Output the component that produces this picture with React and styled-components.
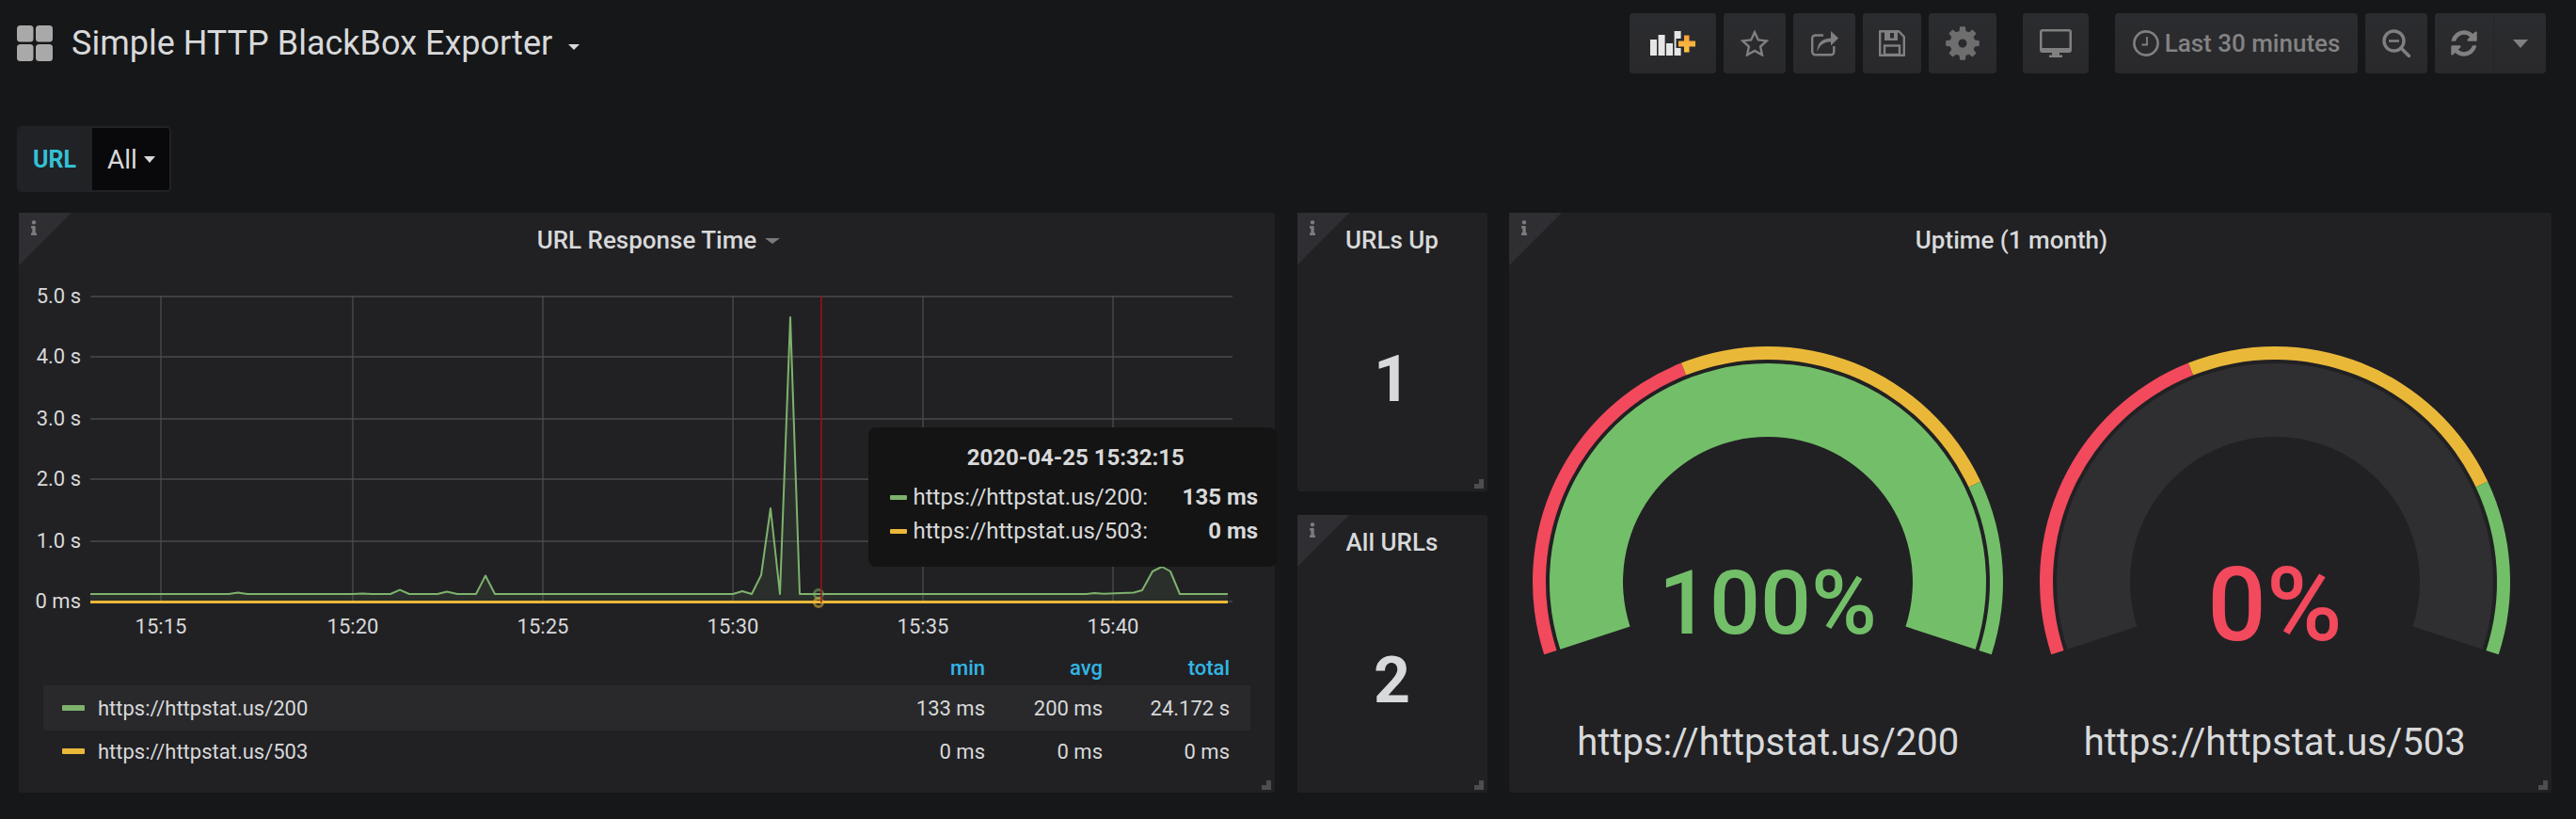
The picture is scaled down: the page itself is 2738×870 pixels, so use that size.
import React from "react";
import styled, { createGlobalStyle } from "styled-components";
import { FaInfo } from "react-icons/fa";

const GlobalStyle = createGlobalStyle`
  html, body {
    margin: 0;
    padding: 0;
    background: #161719;
  }
  body {
    font-family: Roboto, "Liberation Sans", sans-serif;
    color: #d8d9da;
    overflow: hidden;
  }
`;

const Page = styled.div`
  width: 2738px;
  height: 870px;
  box-sizing: border-box;
  background: #161719;
`;

const TopBar = styled.header`
  height: 64px;
  padding: 14px 32px 0 18px;
  display: flex;
  align-items: center;
  justify-content: space-between;
`;

const TitleGroup = styled.div`
  display: flex;
  align-items: center;
`;

const DashTitle = styled.h1`
  margin: 0 0 0 20px;
  font-size: 36px;
  font-weight: 400;
  line-height: 64px;
  color: #d8d9da;
`;

const Caret = styled.span`
  display: inline-block;
  width: 0;
  height: 0;
  border-left: ${(p) => p.$size}px solid transparent;
  border-right: ${(p) => p.$size}px solid transparent;
  border-top: ${(p) => p.$height || p.$size}px solid ${(p) => p.$color || "#d8d9da"};
`;

const TitleCaret = styled(Caret)`
  margin: 8px 0 0 17px;
`;

const Toolbar = styled.div`
  display: flex;
  align-items: center;
`;

const ToolButton = styled.div`
  width: ${(p) => p.$w}px;
  height: 64px;
  margin-left: ${(p) => p.$gap || 8}px;
  border-radius: 4px;
  background: linear-gradient(#2b2c2f, #29292c);
  display: flex;
  align-items: center;
  justify-content: center;
  color: #808080;
  flex: none;
`;

const TimeLabel = styled.span`
  margin-left: 6px;
  font-size: 26px;
  font-weight: 500;
  color: #838383;
`;

const RefreshPart = styled.div`
  flex: ${(p) => (p.$narrow ? "0 0 55px" : "1")};
  height: 100%;
  display: flex;
  align-items: center;
  justify-content: center;
  border-left: ${(p) => (p.$narrow ? "1px solid #242528" : "none")};
`;

const VarRow = styled.div`
  height: 70px;
  margin: 56px 0 22px 18px;
  display: flex;
`;

const VarBox = styled.div`
  display: flex;
  border: 2px solid #202226;
  border-radius: 5px;
  overflow: hidden;
`;

const VarLabel = styled.div`
  width: 78px;
  padding-right: 2px;
  box-sizing: border-box;
  background: #212226;
  color: #33c1d6;
  font-size: 25px;
  font-weight: 700;
  display: flex;
  align-items: center;
  justify-content: center;
`;

const VarValue = styled.div`
  width: 82px;
  background: #09090b;
  color: #d8d9da;
  font-size: 28px;
  display: flex;
  align-items: center;
  justify-content: flex-start;
  padding-left: 16px;
  box-sizing: border-box;
  gap: 7px;
`;

const Dashboard = styled.main`
  padding: 0 26px 0 20px;
  display: grid;
  grid-template-columns: 1335px 202px 1108px;
  column-gap: 23.5px;
  height: 616px;
`;

const Stack = styled.div`
  display: flex;
  flex-direction: column;
  gap: 25px;
`;

const Panel = styled.section`
  position: relative;
  flex: 1;
  background: #212124;
  border-radius: 3px;
  display: flex;
  flex-direction: column;
  min-width: 0;

  &::after {
    content: "";
    position: absolute;
    right: 4px;
    bottom: 3px;
    width: 5px;
    height: 5px;
    border-right: 5px solid #4d4d50;
    border-bottom: 5px solid #4d4d50;
  }
`;

const InfoCorner = styled.div`
  position: absolute;
  left: 0;
  top: 0;
  width: 56px;
  height: 56px;
  background: #2e2e33;
  clip-path: polygon(0 0, 100% 0, 0 100%);
  color: #7b7b7b;
  padding: 8px 0 0 8px;
  box-sizing: border-box;
`;

const PanelHead = styled.div`
  height: 58px;
  flex: none;
  padding-right: ${(p) => p.$shift || 0}px;
  display: flex;
  align-items: center;
  justify-content: center;
`;

const PanelTitle = styled.h2`
  position: relative;
  margin: 0;
  font-size: 26px;
  font-weight: 500;
  color: #d8d9da;
`;

const TitleDrop = styled(Caret)`
  position: absolute;
  left: 100%;
  top: 13px;
  margin-left: 9px;
`;

const ChartSvg = styled.svg`
  display: block;
  flex: none;
`;

const AxisText = styled.text`
  font-size: 22px;
  fill: #d8d9da;
  dominant-baseline: central;
`;

const Legend = styled.div`
  padding: 0 26px;
`;

const LegendRow = styled.div`
  height: ${(p) => p.$h}px;
  display: grid;
  grid-template-columns: 1fr 125px 125px 135px;
  padding: 0 22px 0 20px;
  align-items: center;
  background: ${(p) => (p.$active ? "#29292c" : "transparent")};
  font-size: 22px;
  color: #d8d9da;
`;

const LegendHead = styled(LegendRow)`
  color: #33b5e5;
  font-weight: 500;
`;

const LegendName = styled.div`
  display: flex;
  align-items: center;
  gap: 14px;
`;

const Swatch = styled.i`
  display: block;
  width: ${(p) => p.$w}px;
  height: ${(p) => p.$h}px;
  border-radius: 1px;
  background: ${(p) => p.$color};
`;

const Num = styled.div`
  text-align: right;
`;

const Tooltip = styled.div`
  position: absolute;
  left: 902.5px;
  top: 228px;
  width: 434.5px;
  height: 148px;
  box-sizing: border-box;
  padding: 16px 20px 0 23px;
  background: #141414;
  border-radius: 8px;
  color: #d8d9da;
  font-size: 24px;
`;

const TipTitle = styled.div`
  text-align: center;
  font-weight: 700;
  line-height: 32px;
  margin-bottom: 8px;
  margin-right: -4px;
`;

const TipRow = styled.div`
  display: flex;
  align-items: center;
  height: 36px;
  gap: 7px;
`;

const TipValue = styled.b`
  margin-left: auto;
  font-weight: 700;
`;

const StatValue = styled.div`
  flex: 1;
  display: flex;
  align-items: center;
  justify-content: center;
  font-size: 68px;
  font-weight: 700;
  color: #d8d9da;
`;

const GaugeGrid = styled.div`
  flex: 1;
  display: grid;
  grid-template-columns: 1fr 1fr;
  padding: 0 25px 0 6px;
`;

const GaugeCell = styled.div`
  display: flex;
  flex-direction: column;
  align-items: center;
`;

const GaugeText = styled.text`
  font-size: ${(p) => p.$size}px;
  font-weight: 500;
  fill: ${(p) => p.$color};
  text-anchor: middle;
  dominant-baseline: central;
`;

const GaugeLabel = styled.div`
  margin-top: 45px;
  font-size: 40px;
  line-height: 48px;
  color: #d8d9da;
`;

const GREEN = "#73bf69";
const RED = "#f2495c";
const YELLOW = "#eab839";

// grid of the time graph, in page pixels
const Y_TICKS = [
  ["5.0 s", 315],
  ["4.0 s", 379],
  ["3.0 s", 445],
  ["2.0 s", 509],
  ["1.0 s", 575],
  ["0 ms", 639],
];
const X_TICKS = [
  ["15:15", 171],
  ["15:20", 375],
  ["15:25", 577],
  ["15:30", 779],
  ["15:35", 981],
  ["15:40", 1183],
];
const SERIES = [
  [96, 631], [243, 631], [253, 629.5], [263, 631], [375, 631], [385, 630.4], [395, 631],
  [415, 631], [425, 626.6], [435, 631], [465, 631], [475, 628.5], [486, 631], [506, 631],
  [516, 611.5], [526, 631], [779, 631], [789, 628], [799, 631], [809, 611], [819, 540],
  [829, 631], [840, 337], [850, 631], [1155, 631], [1163, 630], [1173, 630.7], [1192, 630],
  [1205, 629.5], [1214, 627], [1225, 607], [1235, 602], [1244, 607], [1254, 631], [1305, 631],
];

const polar = (cx, cy, r, deg) => {
  const a = (deg * Math.PI) / 180;
  return [cx + r * Math.cos(a), cy + r * Math.sin(a)];
};

// sector of a ring, from and to as a share of the 216 degree sweep
const sector = (cx, cy, r0, r1, from, to) => {
  const a0 = 162 + from * 216;
  const a1 = 162 + to * 216;
  const large = a1 - a0 > 180 ? 1 : 0;
  const [x0, y0] = polar(cx, cy, r1, a0);
  const [x1, y1] = polar(cx, cy, r1, a1);
  const [x2, y2] = polar(cx, cy, r0, a1);
  const [x3, y3] = polar(cx, cy, r0, a0);
  return `M${x0} ${y0}A${r1} ${r1} 0 ${large} 1 ${x1} ${y1}L${x2} ${y2}A${r0} ${r0} 0 ${large} 0 ${x3} ${y3}Z`;
};

const gearPoints = () => {
  const pts = [];
  for (let i = 0; i < 8; i++) {
    const c = i * 45 - 90;
    [[18, -9], [18, 9], [13.5, 15], [13.5, 30]].forEach(([r, d]) => {
      const [x, y] = polar(18, 18, r, c + d);
      pts.push(`${x.toFixed(2)},${y.toFixed(2)}`);
    });
  }
  return pts.join(" ");
};

const GridIcon = () => (
  <svg width="38" height="38" viewBox="0 0 38 38">
    <rect x="0" y="0" width="17.5" height="17.5" rx="3.5" fill="#a9a9a9" />
    <rect x="20" y="0" width="18" height="17.5" rx="3.5" fill="#a9a9a9" />
    <rect x="0" y="20" width="17.5" height="18" rx="3.5" fill="#a9a9a9" />
    <rect x="20" y="20" width="18" height="18" rx="3.5" fill="#a9a9a9" />
  </svg>
);

const AddPanelIcon = () => (
  <svg width="48" height="26" viewBox="0 0 48 26">
    <defs>
      <linearGradient id="plus" x1="0" y1="0" x2="0" y2="1">
        <stop offset="0" stopColor="#f9a03a" />
        <stop offset="1" stopColor="#fbc240" />
      </linearGradient>
    </defs>
    <rect x="0" y="9" width="7" height="17" fill="#e6e6e6" />
    <rect x="8.6" y="4" width="7" height="22" fill="#e6e6e6" />
    <rect x="17" y="13" width="7" height="13" fill="#e6e6e6" />
    <rect x="25.6" y="0" width="7" height="26" fill="#e6e6e6" />
    <path d="M35 3.5h7v6h6v7h-6v6h-7v-6h-6v-7h6z" fill="#2a2b2e" stroke="#2a2b2e" strokeWidth="3" />
    <path d="M36 4.5h5.5v6h6.5v6h-6.500v6h-5.500v-6h-6v-6h6z" fill="url(#plus)" />
  </svg>
);

const StarIcon = () => (
  <svg width="30" height="28" viewBox="0 0 30 28">
    <path
      d="M15 2.200 18.800 10.400 27.800 11.400 21.100 17.500 23 26.400 15 21.900 7 26.400 8.900 17.500 2.200 11.400 11.200 10.400Z"
      fill="none"
      stroke="#7f7f7f"
      strokeWidth="2.400"
      strokeLinejoin="miter"
    />
  </svg>
);

const ShareIcon = () => (
  <svg width="29" height="28" viewBox="0 0 29 28">
    <path
      d="M13 5.500H4.500a3.300 3.300 0 0 0-3.300 3.300V23a3.300 3.300 0 0 0 3.300 3.300H21a3.300 3.300 0 0 0 3.300-3.300V17"
      fill="none"
      stroke="#808080"
      strokeWidth="2.400"
    />
    <path d="M6.500 23C6.500 14 11 9 21 8.500V1L29 8.500 21 16.500V12.500C14 12.500 9.500 15 6.500 23Z" fill="#808080" />
  </svg>
);

const SaveIcon = () => (
  <svg width="28" height="28" viewBox="0 0 28 28">
    <path d="M1.200 1.200H21L26.800 7V26.800H1.200Z" fill="none" stroke="#808080" strokeWidth="2.400" strokeLinejoin="round" />
    <path d="M6 1.200H20V11H6ZM12 3V8.500H16V3Z" fill="#808080" fillRule="evenodd" />
    <rect x="6" y="16.500" width="16" height="9.500" fill="none" stroke="#808080" strokeWidth="2.400" />
  </svg>
);

const GearIcon = () => (
  <svg width="36" height="36" viewBox="0 0 36 36">
    <path
      d={`M${gearPoints().split(" ").join("L")}Z M18 13.500a4.500 4.500 0 1 0 0.010 0Z`}
      fill="#6e6e6e"
      fillRule="evenodd"
    />
  </svg>
);

const MonitorIcon = () => (
  <svg width="34" height="30" viewBox="0 0 34 30">
    <path
      d="M3 0h28a3 3 0 0 1 3 3v19a3 3 0 0 1-3 3H21v2.500h3V30H10v-2.500h3V25H3a3 3 0 0 1-3-3V3a3 3 0 0 1 3-3ZM2.500 2.500V20h29V2.500Z"
      fill="#808080"
      fillRule="evenodd"
    />
  </svg>
);

const ClockIcon = () => (
  <svg width="28" height="28" viewBox="0 0 28 28">
    <circle cx="14" cy="14" r="12.600" fill="none" stroke="#808080" strokeWidth="2.600" />
    <path d="M15 7v8.500H9.500" fill="none" stroke="#808080" strokeWidth="1.800" />
  </svg>
);

const ZoomOutIcon = () => (
  <svg width="30" height="30" viewBox="0 0 30 30">
    <circle cx="12.500" cy="12.500" r="10.500" fill="none" stroke="#808080" strokeWidth="3.400" />
    <path d="M20 20l8.500 8.500" stroke="#808080" strokeWidth="3.600" strokeLinecap="round" />
    <path d="M7 12.500h11" stroke="#808080" strokeWidth="2.600" />
  </svg>
);

const RefreshIcon = () => (
  <svg width="32" height="32" viewBox="0 0 1792 1792">
    <path
      fill="#808080"
      d="M1639 1056q0 5-1 7-64 268-268 434.500t-478 166.500q-146 0-282.500-55t-243.500-157l-129 129q-19 19-45 19t-45-19-19-45v-448q0-26 19-45t45-19h448q26 0 45 19t19 45-19 45l-137 137q71 66 161 102t187 36q134 0 250-65t186-179q11-17 53-117 8-23 30-23h192q13 0 22.500 9.500t9.500 22.500zm25-800v448q0 26-19 45t-45 19h-448q-26 0-45-19t-19-45 19-45l138-138q-148-137-349-137-134 0-250 65t-186 179q-11 17-53 117-8 23-30 23h-199q-13 0-22.500-9.500t-9.500-22.500v-7q65-268 270-434.500t480-166.500q146 0 284 55.500t245 156.500l130-129q19-19 45-19t45 19 19 45z"
    />
  </svg>
);

const CornerInfo = () => (
  <InfoCorner>
    <FaInfo size={16} />
  </InfoCorner>
);

const TimeGraph = () => {
  const line = SERIES.map((p) => p.join(",")).join(" ");
  const area = `96,639 ${line} 1305,639`;
  return (
    <ChartSvg width="1335" height="406" viewBox="20 284 1335 406">
      {Y_TICKS.map(([label, y]) => (
        <g key={label}>
          <line x1="96" x2="1310" y1={y} y2={y} stroke="#4a4a4c" strokeWidth="1.500" />
          <AxisText x="86" y={y - 1} textAnchor="end">
            {label}
          </AxisText>
        </g>
      ))}
      {X_TICKS.map(([label, x]) => (
        <g key={label}>
          <line x1={x} x2={x} y1="314" y2="640" stroke="#4f4f51" strokeWidth="1.200" />
          <AxisText x={x} y="665" textAnchor="middle">
            {label}
          </AxisText>
        </g>
      ))}
      <polygon points={area} fill="#7eb26d" fillOpacity="0.1" />
      <polyline points={line} fill="none" stroke="#7eb26d" strokeWidth="2" strokeLinejoin="round" />
      <line x1="96" x2="1305" y1="639.500" y2="639.500" stroke="#eab839" strokeWidth="3" />
      <circle cx="870" cy="631" r="4.500" fill="none" stroke="#7eb26d" strokeOpacity="0.55" strokeWidth="3" />
      <circle cx="870" cy="640" r="4.500" fill="none" stroke="#eab839" strokeOpacity="0.55" strokeWidth="3" />
      <line x1="873" x2="873" y1="314" y2="640" stroke="#a30f0f" strokeWidth="1.500" />
    </ChartSvg>
  );
};

const Gauge = ({ value, fraction, text, size, color, label }) => (
  <GaugeCell>
    <svg width="538" height="436" viewBox="0 284 538 436">
      <path d={sector(269, 618, 236, 250, 0, 0.4)} fill={RED} />
      <path d={sector(269, 618, 236, 250, 0.4, 0.8)} fill={YELLOW} />
      <path d={sector(269, 618, 236, 250, 0.8, 1)} fill={GREEN} />
      <path d={sector(269, 618, 154, 232, 0, 1)} fill="#2f2f32" />
      {fraction > 0 && <path d={sector(269, 618, 154, 232, 0, fraction)} fill={color} />}
      <GaugeText x="269" y={value} $size={size} $color={color}>
        {text}
      </GaugeText>
    </svg>
    <GaugeLabel>{label}</GaugeLabel>
  </GaugeCell>
);

export default function App() {
  return (
    <Page>
      <GlobalStyle />
      <TopBar>
        <TitleGroup>
          <GridIcon />
          <DashTitle>Simple HTTP BlackBox Exporter</DashTitle>
          <TitleCaret $size={6} />
        </TitleGroup>
        <Toolbar>
          <ToolButton $w={92}>
            <AddPanelIcon />
          </ToolButton>
          <ToolButton $w={66}>
            <StarIcon />
          </ToolButton>
          <ToolButton $w={66}>
            <ShareIcon />
          </ToolButton>
          <ToolButton $w={62}>
            <SaveIcon />
          </ToolButton>
          <ToolButton $w={72}>
            <GearIcon />
          </ToolButton>
          <ToolButton $w={70} $gap={28}>
            <MonitorIcon />
          </ToolButton>
          <ToolButton $w={258} $gap={28}>
            <ClockIcon />
            <TimeLabel>Last 30 minutes</TimeLabel>
          </ToolButton>
          <ToolButton $w={66}>
            <ZoomOutIcon />
          </ToolButton>
          <ToolButton $w={118}>
            <RefreshPart>
              <RefreshIcon />
            </RefreshPart>
            <RefreshPart $narrow>
              <Caret $size={8} $height={9} $color="#808080" />
            </RefreshPart>
          </ToolButton>
        </Toolbar>
      </TopBar>

      <VarRow>
        <VarBox>
          <VarLabel>URL</VarLabel>
          <VarValue>
            All
            <Caret $size={6.500} $height={7} />
          </VarValue>
        </VarBox>
      </VarRow>

      <Dashboard>
        <Panel>
          <CornerInfo />
          <PanelHead>
            <PanelTitle>
              URL Response Time
              <TitleDrop $size={8} $height={6} $color="#7b7b7b" />
            </PanelTitle>
          </PanelHead>
          <TimeGraph />
          <Legend>
            <LegendHead $h={38}>
              <span />
              <Num>min</Num>
              <Num>avg</Num>
              <Num>total</Num>
            </LegendHead>
            <LegendRow $h={48} $active>
              <LegendName>
                <Swatch $w={24} $h={6} $color="#7eb26d" />
                https://httpstat.us/200
              </LegendName>
              <Num>133 ms</Num>
              <Num>200 ms</Num>
              <Num>24.172 s</Num>
            </LegendRow>
            <LegendRow $h={44}>
              <LegendName>
                <Swatch $w={24} $h={6} $color="#eab839" />
                https://httpstat.us/503
              </LegendName>
              <Num>0 ms</Num>
              <Num>0 ms</Num>
              <Num>0 ms</Num>
            </LegendRow>
          </Legend>
          <Tooltip>
            <TipTitle>2020-04-25 15:32:15</TipTitle>
            <TipRow>
              <Swatch $w={18} $h={5} $color="#7eb26d" />
              https://httpstat.us/200:
              <TipValue>135 ms</TipValue>
            </TipRow>
            <TipRow>
              <Swatch $w={18} $h={5} $color="#eab839" />
              https://httpstat.us/503:
              <TipValue>0 ms</TipValue>
            </TipRow>
          </Tooltip>
        </Panel>

        <Stack>
          <Panel>
            <CornerInfo />
            <PanelHead>
              <PanelTitle>URLs Up</PanelTitle>
            </PanelHead>
            <StatValue>1</StatValue>
          </Panel>
          <Panel>
            <CornerInfo />
            <PanelHead>
              <PanelTitle>All URLs</PanelTitle>
            </PanelHead>
            <StatValue>2</StatValue>
          </Panel>
        </Stack>

        <Panel>
          <CornerInfo />
          <PanelHead $shift={40}>
            <PanelTitle>Uptime (1 month)</PanelTitle>
          </PanelHead>
          <GaugeGrid>
            <Gauge value={640} fraction={1} text="100%" size={95} color={GREEN} label="https://httpstat.us/200" />
            <Gauge value={642} fraction={0} text="0%" size={110} color={RED} label="https://httpstat.us/503" />
          </GaugeGrid>
        </Panel>
      </Dashboard>
    </Page>
  );
}
